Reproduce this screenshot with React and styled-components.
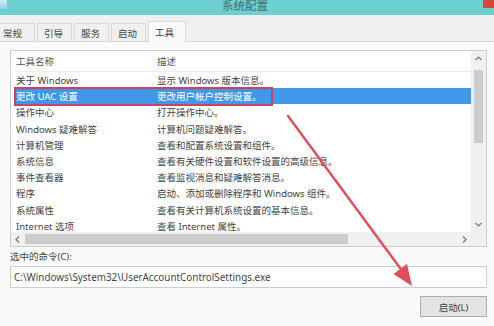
import React from 'react'
import styled, { createGlobalStyle } from 'styled-components'

const tools = [
  ['关于 Windows', '显示 Windows 版本信息。'],
  ['更改 UAC 设置', '更改用户帐户控制设置。'],
  ['操作中心', '打开操作中心。'],
  ['Windows 疑难解答', '计算机问题疑难解答。'],
  ['计算机管理', '查看和配置系统设置和组件。'],
  ['系统信息', '查看有关硬件设置和软件设置的高级信息。'],
  ['事件查看器', '查看监视消息和疑难解答消息。'],
  ['程序', '启动、添加或删除程序和 Windows 组件。'],
  ['系统属性', '查看有关计算机系统设置的基本信息。'],
  ['Internet 选项', '查看 Internet 属性。'],
]

const tabs = ['常规', '引导', '服务', '启动', '工具']

export default function App() {
  return (
    <>
      <GlobalStyle />
      <Window>
        <TitleBar>
          <AppIcon />
          <Title>系统配置</Title>
          <CloseButton />
        </TitleBar>
        <TabStrip>
          {tabs.map((t, i) => (
            <Tab key={t} $active={t === '工具'} $first={i === 0}>{t}</Tab>
          ))}
        </TabStrip>
        <Panel>
          <ListBox>
            <ListContent>
              <HeaderRow>
                <span>工具名称</span>
                <span>描述</span>
              </HeaderRow>
              {tools.map(([name, desc], i) => (
                <Row key={name} $selected={i === 1}>
                  <span>{name}</span>
                  <span>{desc}</span>
                  {i === 1 && <Highlight />}
                </Row>
              ))}
            </ListContent>
            <VScroll>
              <ArrowBox>
                <svg width="7" height="5" viewBox="0 0 7 5"><path d="M0.5 4 L3.5 1 L6.5 4" fill="none" stroke="#777" strokeWidth="1.2" /></svg>
              </ArrowBox>
              <VThumb />
              <Spacer />
              <ArrowBox>
                <svg width="7" height="5" viewBox="0 0 7 5"><path d="M0.5 1 L3.5 4 L6.5 1" fill="none" stroke="#777" strokeWidth="1.2" /></svg>
              </ArrowBox>
            </VScroll>
            <HScroll>
              <HArrow>
                <svg width="5" height="7" viewBox="0 0 5 7"><path d="M4 0.5 L1 3.5 L4 6.5" fill="none" stroke="#777" strokeWidth="1.2" /></svg>
              </HArrow>
              <HThumb />
              <Spacer />
              <HArrow>
                <svg width="5" height="7" viewBox="0 0 5 7"><path d="M1 0.5 L4 3.5 L1 6.5" fill="none" stroke="#777" strokeWidth="1.2" /></svg>
              </HArrow>
            </HScroll>
            <Corner />
          </ListBox>
          <Label>选中的命令(C):</Label>
          <CommandInput>C:\Windows\System32\UserAccountControlSettings.exe</CommandInput>
          <ButtonRow>
            <Button>启动(L)</Button>
          </ButtonRow>
        </Panel>
        <Annotation width="494" height="326" viewBox="0 0 494 326">
          <line x1="288" y1="116" x2="403" y2="272" stroke="#de4f5c" strokeWidth="2.4" strokeLinecap="round" />
          <polygon points="412,286 393.5,274 407,264" fill="#de4f5c" />
        </Annotation>
      </Window>
    </>
  )
}

const GlobalStyle = createGlobalStyle`
body {
  margin: 0;
  overflow: hidden;
  font-family: "Noto Sans", "Noto Sans CJK SC", sans-serif;
}
`

const Window = styled.div`
position: relative;
width: 494px;
height: 326px;
display: flex;
flex-direction: column;
background: #fafafa;
overflow: hidden;
`

const TitleBar = styled.div`
height: 15px;
flex-shrink: 0;
background: #6dcfcf;
display: flex;
justify-content: space-between;
align-items: flex-start;
`

const AppIcon = styled.div`
width: 7px;
height: 9px;
background: linear-gradient(#cfeef4, #8fd2e6);
`

const Title = styled.div`
font-family: "Noto Sans CJK SC", sans-serif;
font-size: 11.5px;
line-height: 11px;
margin-top: 0;
color: #3f6f6e;
`

const CloseButton = styled.div`
width: 11px;
height: 8px;
background: #d8453c;
`

const TabStrip = styled.div`
height: 27px;
flex-shrink: 0;
box-sizing: border-box;
background: #f0f0f0;
border-bottom: 1px solid #d6d6d6;
display: flex;
align-items: flex-end;
gap: 2px;
`

const Tab = styled.div`
box-sizing: border-box;
width: ${p => (p.$active ? 38 : 35)}px;
height: ${p => (p.$active ? 21 : 18)}px;
margin-bottom: ${p => (p.$active ? -1 : 0)}px;
display: flex;
align-items: center;
padding-left: ${p => (p.$first ? 3 : 6)}px;
font-family: "Noto Sans CJK SC", sans-serif;
font-size: 9.5px;
color: #444;
background: ${p => (p.$active ? '#fafafa' : '#f0f0f0')};
border: 1px solid #d9d9d9;
border-bottom: none;
border-left: ${p => (p.$first ? 'none' : '1px solid #d9d9d9')};
`

const Panel = styled.div`
flex: 1;
display: flex;
flex-direction: column;
padding: 8px 7px 0 10px;
`

const ListBox = styled.div`
height: 197px;
box-sizing: border-box;
border: 1px solid #cdcdcd;
background: #fff;
display: grid;
grid-template-columns: 1fr 15px;
grid-template-rows: 1fr 14px;
`

const ListContent = styled.div`
overflow: hidden;
font-size: 9.5px;
color: #444;
`

const HeaderRow = styled.div`
height: 20px;
margin-left: 3px;
padding-left: 2px;
display: grid;
grid-template-columns: 141px 1fr;
align-items: center;
border-bottom: 1px solid #ececec;
color: #555;
font-family: "Noto Sans CJK SC", sans-serif;
`

const Row = styled.div`
position: relative;
height: 16.2px;
margin-left: 3px;
padding-left: 2px;
display: grid;
grid-template-columns: 141px 1fr;
align-items: center;
white-space: nowrap;
background: ${p => (p.$selected ? '#3f98ea' : 'transparent')};
color: ${p => (p.$selected ? '#fff' : '#444')};
`

const Highlight = styled.div`
position: absolute;
left: 0;
top: -1px;
width: 259px;
height: 19px;
box-sizing: border-box;
border: 2px solid #d33e5c;
`

const VScroll = styled.div`
background: #f0f0f0;
display: flex;
flex-direction: column;
`

const ArrowBox = styled.div`
height: 15px;
display: flex;
align-items: center;
justify-content: center;
flex-shrink: 0;
`

const VThumb = styled.div`
height: 73px;
margin: 4px 3px 0;
background: #cdcdcd;
`

const Spacer = styled.div`
flex: 1;
`

const HScroll = styled.div`
background: #f0f0f0;
display: flex;
align-items: center;
`

const HArrow = styled.div`
width: 13px;
height: 14px;
display: flex;
align-items: center;
justify-content: center;
flex-shrink: 0;
`

const HThumb = styled.div`
width: 323px;
height: 10px;
margin-left: 1px;
background: #cdcdcd;
`

const Corner = styled.div`
background: #f0f0f0;
`

const Label = styled.div`
margin-top: 3px;
height: 14px;
line-height: 14px;
font-size: 9.5px;
color: #444;
`

const CommandInput = styled.div`
margin-top: 2px;
height: 22px;
box-sizing: border-box;
border: 1px solid #cdcdcd;
background: #fff;
padding-left: 3px;
display: flex;
align-items: center;
font-size: 9.9px;
color: #444;
`

const ButtonRow = styled.div`
margin-top: 8px;
display: flex;
justify-content: flex-end;
`

const Button = styled.div`
width: 67px;
height: 21px;
box-sizing: border-box;
border: 1px solid #adadad;
background: #e3e3e3;
display: flex;
align-items: center;
justify-content: center;
font-size: 9.5px;
color: #444;
`

const Annotation = styled.svg`
position: absolute;
left: 0;
top: 0;
pointer-events: none;
`
